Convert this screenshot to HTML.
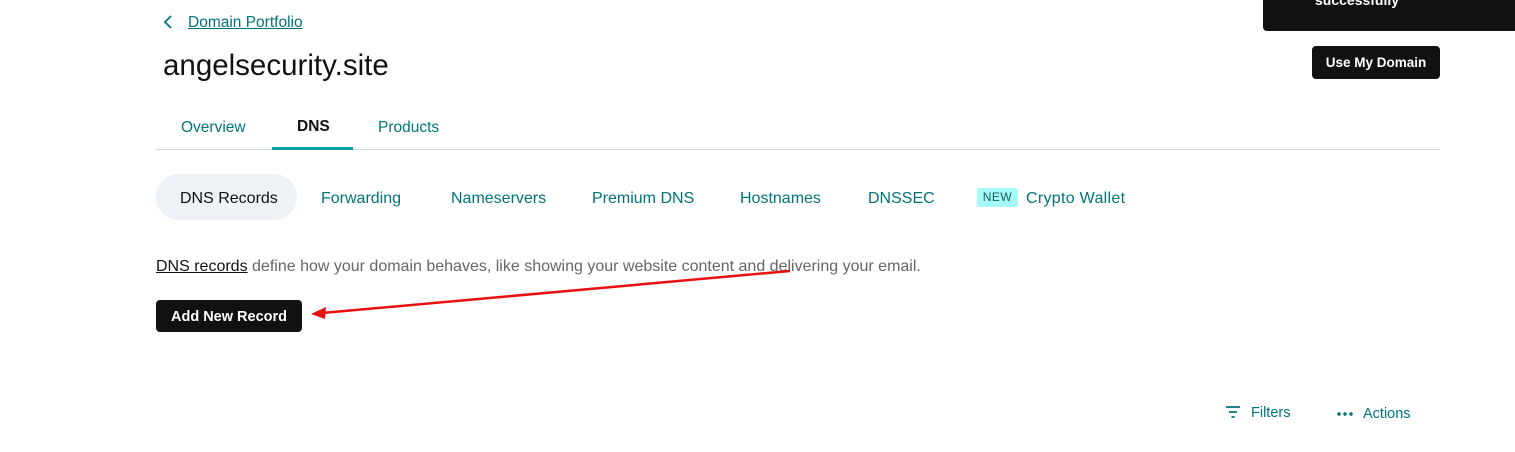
<!DOCTYPE html><html><head><style>
body{margin:0;width:1515px;height:452px;background:#fff;position:relative;overflow:hidden;font-family:"Liberation Sans",sans-serif}
.a{position:absolute;white-space:nowrap}
.t{color:#00747a;font-size:16px}
</style></head><body>
<svg class="a" style="left:162px;top:14px" width="12" height="16"><path d="M9 2 L3 8 L9 14" stroke="#00747a" stroke-width="1.8" fill="none"/></svg>
<div class="a t" style="left:188px;top:14px;font-size:15.5px;text-decoration:underline">Domain Portfolio</div>
<div class="a" style="left:163px;top:49px;font-size:29.5px;color:#111">angelsecurity.site</div>
<div class="a" style="left:1263px;top:-10px;width:260px;height:41px;background:#111;border-radius:4px"></div>
<div class="a" style="left:1315px;top:-8px;color:#fff;font-size:14px;font-weight:bold">successfully</div>
<div class="a" style="left:1312px;top:46px;width:128px;height:33px;background:#111;border-radius:4px;color:#fff;font-size:13.5px;font-weight:bold;line-height:34px;text-align:center">Use My Domain</div>
<div class="a t" style="left:181px;top:119px;font-size:15.5px">Overview</div>
<div class="a" style="left:297px;top:118px;font-size:15.5px;font-weight:bold;color:#111">DNS</div>
<div class="a t" style="left:378px;top:119px;font-size:15.5px">Products</div>
<div class="a" style="left:156px;top:149px;width:1284px;height:1px;background:#d4dbe0"></div>
<div class="a" style="left:272px;top:147px;width:81px;height:3px;background:#00a4a6"></div>
<div class="a" style="left:156px;top:174px;width:141px;height:46px;background:#eef2f7;border-radius:23px"></div>
<div class="a" style="left:180px;top:190px;font-size:16px;color:#111">DNS Records</div>
<div class="a t" style="left:321px;top:190px">Forwarding</div>
<div class="a t" style="left:451px;top:190px">Nameservers</div>
<div class="a t" style="left:592px;top:190px">Premium DNS</div>
<div class="a t" style="left:740px;top:190px">Hostnames</div>
<div class="a t" style="left:868px;top:190px">DNSSEC</div>
<div class="a" style="left:977px;top:188px;width:41px;height:19px;background:#a5fafa;border-radius:3px;font-size:12px;color:#1a5c60;line-height:19px;text-align:center;letter-spacing:.5px">NEW</div>
<div class="a t" style="left:1026px;top:190px;letter-spacing:.3px">Crypto Wallet</div>
<div class="a" style="left:156px;top:258px;font-size:16px;color:#666"><span style="color:#111;text-decoration:underline">DNS records</span> define how your domain behaves, like showing your website content and delivering your email.</div>
<div class="a" style="left:156px;top:300px;width:146px;height:32px;background:#111;border-radius:4px;color:#fff;font-size:14.5px;font-weight:bold;line-height:35px;text-align:center">Add New Record</div>
<svg class="a" style="left:0;top:0" width="1515" height="452"><line x1="790" y1="271" x2="322" y2="313" stroke="#e81010" stroke-width="2.5"/><path d="M311 314 L326 307 L325 319Z" fill="#e81010"/></svg>
<svg class="a" style="left:1225px;top:405px" width="16" height="14"><path d="M1 2H15M4 7H12M6.5 12H9.5" stroke="#00747a" stroke-width="1.8"/></svg>
<div class="a t" style="left:1251px;top:405px;font-size:14.5px">Filters</div>
<div class="a" style="left:1336px;top:412px;width:17px;height:4px;background:radial-gradient(circle,#00747a 1.6px,transparent 2px) 0 0/6px 4px"></div>
<div class="a t" style="left:1363px;top:406px;font-size:14.5px">Actions</div>
</body></html>
